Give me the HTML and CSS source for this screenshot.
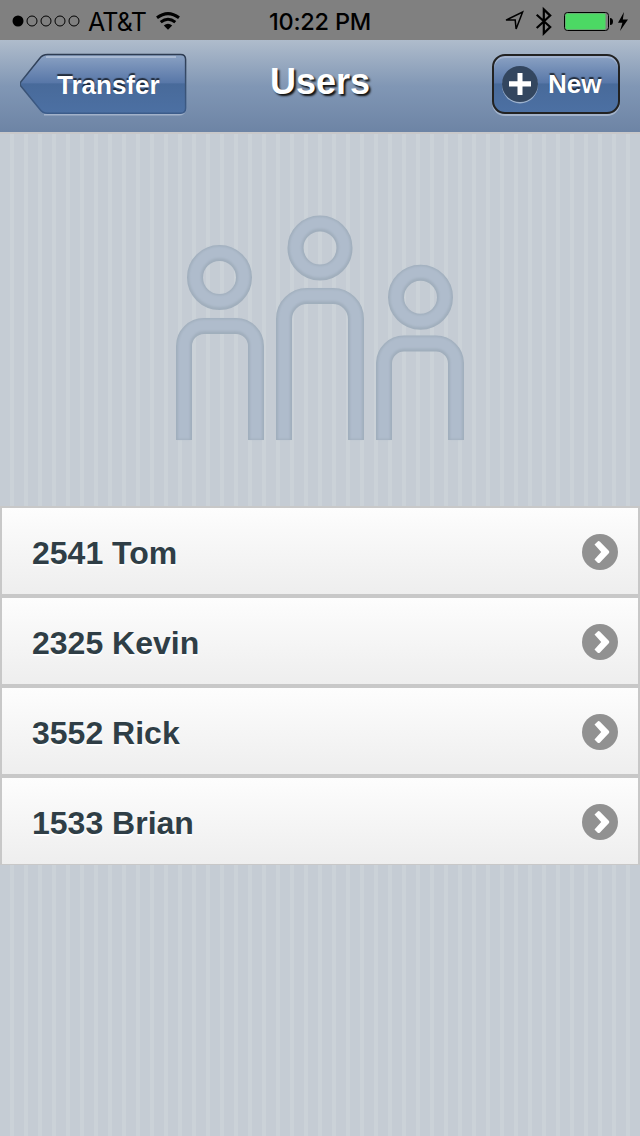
FILE: index.html
```html
<!DOCTYPE html>
<html lang="en">
<head>
<meta charset="utf-8">
<title>Users</title>
<link rel="stylesheet" href="styles.css">
</head>
<body>
<div class="status">
  <div class="status-left">
    <svg class="signal" width="68" height="12" viewBox="0 0 68 12"><circle cx="6" cy="6" r="5.5"/><g fill="none" stroke="#000" stroke-width="1"><circle cx="20" cy="6" r="5"/><circle cx="34" cy="6" r="5"/><circle cx="48" cy="6" r="5"/><circle cx="62" cy="6" r="5"/></g></svg>
    <span class="carrier">AT&amp;T</span>
    <svg class="wifi" width="24" height="18" viewBox="0 0 24 18"><g fill="none" stroke="#000" stroke-width="3"><path d="M1 5.8Q12-2.6 23 5.8"/><path d="M4.7 10.2Q12 4.4 19.3 10.2"/></g><path d="M7.8 13.4Q12 10.2 16.2 13.4L12 17.8Z"/></svg>
  </div>
  <div class="clock">10:22 PM</div>
  <svg class="status-right" width="130" height="32" viewBox="0 0 130 32"><path d="M2 15.1L18.6 7 12.1 24 11.2 15.1Z" fill="none" stroke="#000" stroke-width="1.5"/><path d="M32.7 9.8L46.2 22 39.8 28.4V4.4L46.2 10.6 32.7 23" fill="none" stroke="#000" stroke-width="2.2"/><rect x="60.5" y="7.5" width="44" height="18" rx="3" fill="none" stroke="#000"/><rect x="61.5" y="8.5" width="40" height="16" rx="1.5" fill="#4cd964"/><path d="M106 13Q109 13 109 16.5T106 20Z"/><path d="M120 7L114 17.8H118.4L116 26 124 14.6H118.8Z"/></svg>
</div>
<header class="bar">
  <a class="back">
    <svg class="back-shape" width="170" height="64" viewBox="0 0 170 64">
      <defs><linearGradient id="btn" x2="0" y2="1"><stop offset="0" stop-color="#8ba2c3"/><stop offset=".48" stop-color="#5877a8"/><stop offset=".5" stop-color="#486a9a"/><stop offset="1" stop-color="#4c70a3"/></linearGradient>
      <linearGradient id="edge" x2="0" y2="1"><stop offset="0" stop-color="#2e3c52"/><stop offset=".5" stop-color="#39506f"/><stop offset="1" stop-color="#3c5c8a"/></linearGradient></defs>
      <path d="M24 62.8H159Q164 62.8 165.5 58" fill="none" stroke="#a2b2ca" stroke-width="1.5"/>
      <path d="M28 2.6H161Q166 2.6 166 7.6V56Q166 61.2 161 61.2H28Q23 61.2 20 57L1.2 34Q0 32 1.2 30L20 6.5Q23 2.6 28 2.6Z" transform="translate(-.4 0)" fill="url(#btn)" stroke="url(#edge)" stroke-width="1.5"/>
      <path d="M26 5H156" stroke="#a9bad3" stroke-width="2"/>
    </svg>
    <span class="btn-text">Transfer</span>
  </a>
  <h1 class="title">Users</h1>
  <a class="new">
    <svg class="plus" width="38" height="40" viewBox="0 0 38 40"><circle cx="19" cy="21.4" r="18" fill="#9db2ce"/><circle cx="19" cy="20" r="18" fill="#33465f"/><path d="M16.5 9h5v8.3H30v5.2h-8.5V31h-5v-8.5H8v-5.2h8.5Z" fill="#fff"/></svg>
    <span class="btn-text">New</span>
  </a>
</header>
<main>
  <div class="hero">
    <svg width="292" height="230" viewBox="174 212 292 230">
      <defs>
        <filter id="soft" x="-5%" y="-5%" width="110%" height="110%"><feGaussianBlur stdDeviation="1.3"/></filter>
        <g id="people"><circle cx="219.5" cy="277.5" r="24.5"/><circle cx="320" cy="248" r="24.5"/><circle cx="420.5" cy="297.3" r="24.5"/><path d="M184 440V346A20 20 0 0 1 204 326H236A20 20 0 0 1 256 346V440"/><path d="M284 440V319A23 23 0 0 1 307 296H333A23 23 0 0 1 356 319V440"/><path d="M384 440V363A20 20 0 0 1 404 343.5H436A20 20 0 0 1 456 363V440"/></g>
      </defs>
      <use href="#people" fill="none" stroke="#a0aebc" stroke-width="16"/>
      <use href="#people" fill="none" stroke="#afbccc" stroke-width="12" filter="url(#soft)" transform="translate(0 -.7)"/>
    </svg>
  </div>
  <ul class="list">
    <li class="row"><span>2541 Tom</span><svg class="chev" width="36" height="36" viewBox="0 0 36 36"><circle cx="18" cy="18" r="18" fill="#919191"/><path d="M12.5 10.5L16 7.2Q17 6.8 18 7.8L27 17Q27.6 18 27 19L18 28.4Q17 29.4 16 29L12.5 25.5 19.2 18Z" fill="#fff"/></svg></li>
    <li class="row"><span>2325 Kevin</span><svg class="chev" width="36" height="36" viewBox="0 0 36 36"><circle cx="18" cy="18" r="18" fill="#919191"/><path d="M12.5 10.5L16 7.2Q17 6.8 18 7.8L27 17Q27.6 18 27 19L18 28.4Q17 29.4 16 29L12.5 25.5 19.2 18Z" fill="#fff"/></svg></li>
    <li class="row"><span>3552 Rick</span><svg class="chev" width="36" height="36" viewBox="0 0 36 36"><circle cx="18" cy="18" r="18" fill="#919191"/><path d="M12.5 10.5L16 7.2Q17 6.8 18 7.8L27 17Q27.6 18 27 19L18 28.4Q17 29.4 16 29L12.5 25.5 19.2 18Z" fill="#fff"/></svg></li>
    <li class="row"><span>1533 Brian</span><svg class="chev" width="36" height="36" viewBox="0 0 36 36"><circle cx="18" cy="18" r="18" fill="#919191"/><path d="M12.5 10.5L16 7.2Q17 6.8 18 7.8L27 17Q27.6 18 27 19L18 28.4Q17 29.4 16 29L12.5 25.5 19.2 18Z" fill="#fff"/></svg></li>
  </ul>
</main>
</body>
</html>
```
FILE: styles.css
```css
* { box-sizing: border-box; }
body {
  margin: 0;
  min-height: 1136px;
  font-family: "Liberation Sans", Arial, sans-serif;
  background: repeating-linear-gradient(90deg, #c5ccd4 0 10px, #cbd2d8 10px 14px);
}
svg { display: block; flex: none; }
.status {
  height: 40px;
  padding: 0 6px 0 12px;
  display: grid;
  grid-template-columns: 1fr 104px 1fr;
  align-items: center;
  background: #808080;
  color: #000;
}
.status-left { display: flex; align-items: center; white-space: nowrap; }
.carrier { margin-left: 8px; width: 58px; font: 25px/40px Inter, sans-serif; letter-spacing: -0.8px; padding-top: 2px; }
.wifi { margin-left: 10px; }
.clock { padding-top: 2px; margin-left: -6px; font: 500 23.5px/40px Inter, sans-serif; text-align: center; white-space: nowrap; letter-spacing: -0.2px; }
.status-right { justify-self: end; }
.bar {
  height: 92px;
  padding: 12px 20px 0;
  display: grid;
  grid-template-columns: 1fr auto 1fr;
  align-items: start;
  background: linear-gradient(#afbccc, #8197b5 50%, #6d84a5);
  color: #fff;
}
.back { display: grid; width: 170px; height: 64px; }
.back-shape, .back .btn-text { grid-area: 1 / 1; }
.back .btn-text { padding-left: 37px; }
.btn-text { font-size: 26px; font-weight: bold; line-height: 66px; text-shadow: 0 -2px 1px rgba(0,0,0,.65); }
.title {
  margin: 0;
  font-size: 36px;
  line-height: 60px;
  text-shadow: 2px 2px 2px #111;
}
.new {
  justify-self: end;
  width: 128px;
  height: 60px;
  margin-top: 2px;
  padding-left: 7px;
  display: flex;
  align-items: center;
  gap: 9px;
  border: 2px solid #222;
  border-radius: 13px;
  background: linear-gradient(#8ba2c3, #5877a8 48%, #486a9a 50%, #4c70a3);
  box-shadow: 0 2px 0 #a2b2ca, inset 0 2px 0 #a2b3cf;
}
.hero { height: 374px; padding-top: 78px; display: flex; justify-content: center; border-top: 2px solid #c8c8ca; }
.list {
  margin: 0;
  padding: 2px 2px 1px;
  list-style: none;
  display: grid;
  gap: 4px;
  background: #c8c8c8;
}
.row {
  height: 86px;
  padding: 0 20px 0 30px;
  display: flex;
  align-items: center;
  justify-content: space-between;
  background: linear-gradient(#fdfdfd, #eee);
  color: #2f3e46;
  font-size: 32px;
  font-weight: bold;
  text-shadow: 0 2px 0 #fff;
}
.row span { line-height: 82px; padding-top: 4px; }
.chev { margin-top: 2px; }
```
